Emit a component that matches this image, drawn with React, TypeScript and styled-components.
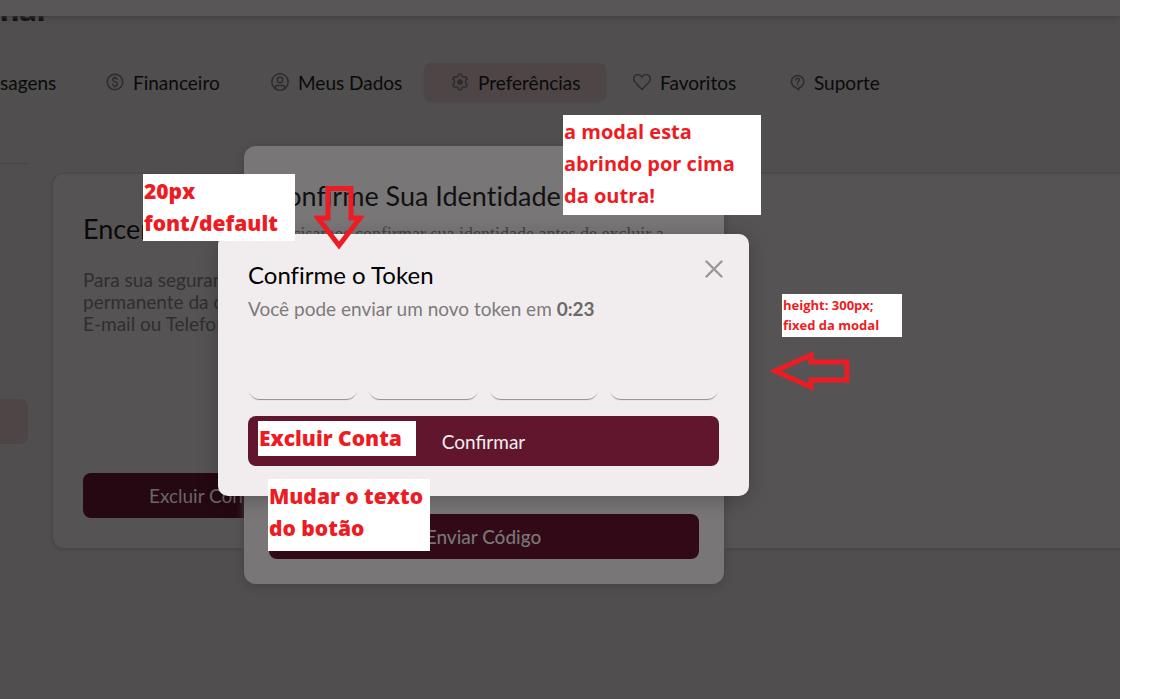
import React from "react";
import styled, { createGlobalStyle } from "styled-components";

const GlobalStyle = createGlobalStyle`
  *, *::before, *::after { box-sizing: border-box; }
  body {
    margin: 0;
    background: #fff;
    font-family: Lato, "Open Sans", sans-serif;
    font-variant-ligatures: none;
  }
  h1, h2, h3, p { margin: 0; font-weight: 400; }
  button, input { font-family: inherit; border: 0; padding: 0; }
`;

const Page = styled.div`
  min-height: 100vh;
  padding-right: 32px;
  display: flex;
`;

const Screen = styled.div`
  position: relative;
  flex: 1;
  min-width: 0;
  overflow: hidden;
  background: #504e4e;
  color: #0b0a0a;
`;

const TopBar = styled.header`
  position: relative;
  z-index: 1;
  height: 16px;
  background: #595657;
  box-shadow: 0 1px 6px #403e3e;
`;

const PageTitle = styled.h1`
  height: 63px;
  margin-top: -16px;
  font-size: 34px;
  line-height: 16px;
  font-weight: 900;
`;

const Tabs = styled.nav`
  display: flex;
  height: 38px;
`;

const Tab = styled.a<{ $width: number; $active?: boolean; $flush?: boolean }>`
  width: ${(p) => p.$width}px;
  flex: none;
  display: flex;
  align-items: center;
  gap: 9px;
  padding-left: ${(p) => (p.$flush ? 0 : 27)}px;
  border-radius: 8px;
  background: ${(p) => (p.$active ? "#4e4546" : "transparent")};
  box-shadow: ${(p) => (p.$active ? "0 1px 2px #484646" : "none")};
  color: inherit;
  text-decoration: none;
  font-size: 19px;
  white-space: nowrap;
`;

const TabIcon = styled.svg`
  flex: none;
  fill: none;
  stroke: #2d2b2b;
  stroke-linecap: round;
  stroke-linejoin: round;
`;

const Content = styled.div`
  display: flex;
  gap: 24px;
  margin-top: 62px;
`;

const SideMenu = styled.aside`
  width: 28px;
  flex: none;
`;

const SideRule = styled.div`
  height: 1px;
  background: #474545;
`;

const SideItem = styled.div`
  height: 45px;
  margin-top: 235px;
  border-radius: 0 8px 8px 0;
  background: #4e4546;
`;

const Card = styled.section`
  flex: 1;
  display: flex;
  flex-direction: column;
  align-items: flex-start;
  height: 376px;
  margin-top: 10px;
  padding: 40px 30px 30px;
  border: 1px solid #4a4848;
  border-right: 0;
  border-radius: 12px 0 0 12px;
  background: #565354;
  box-shadow: 0 1px 2px #464444;
`;

const CardTitle = styled.h2`
  font-size: 27px;
  line-height: 30px;
`;

const CardText = styled.p`
  margin-top: 25px;
  font-size: 19px;
  line-height: 22px;
  color: #302e2e;
`;

const DangerButton = styled.button`
  width: 242px;
  height: 45px;
  margin-top: auto;
  border-radius: 8px;
  background: #250811;
  color: #6a6768;
  font-size: 19px;
`;

const Overlay = styled.div`
  position: absolute;
  inset: 31px 153px 0 0;
  z-index: 2;
  display: flex;
  align-items: center;
  justify-content: center;
`;

const IdentityModal = styled.section`
  display: flex;
  flex-direction: column;
  width: 480px;
  height: 438px;
  padding: 32px 25px 25px;
  border-radius: 12px;
  background: #797677;
  box-shadow: 0 2px 8px #444242;
  color: #121111;
`;

const IdentityTitle = styled.h2`
  font-size: 27px;
  line-height: 36px;
`;

const IdentityText = styled.p`
  margin-top: 8px;
  font-family: "Liberation Serif", serif;
  font-size: 18px;
  line-height: 24px;
  color: #444243;
`;

const SendButton = styled.button`
  height: 45px;
  margin-top: auto;
  border-radius: 8px;
  background: #320a17;
  color: #797677;
  font-size: 19px;
  font-weight: 500;
`;

const TokenModal = styled.section`
  display: flex;
  flex-direction: column;
  width: 531px;
  height: 262px;
  padding: 26px 30px 30px;
  border-radius: 10px;
  background: #f1edee;
  box-shadow: 0 4px 20px rgba(0, 0, 0, 0.25);
  color: #000;
`;

const TokenHeader = styled.header`
  display: flex;
  align-items: center;
  justify-content: space-between;
  height: 30px;
`;

const TokenTitle = styled.h2`
  font-size: 24px;
  line-height: 30px;
`;

const CloseButton = styled.button`
  width: 30px;
  height: 30px;
  margin: -12px -10px 0 0;
  display: grid;
  place-items: center;
  background: none;
`;

const TokenText = styled.p`
  margin-top: 8px;
  font-size: 19px;
  line-height: 22px;
  color: #7d7a7b;

  strong { color: #6b6869; }
`;

const Digits = styled.div`
  display: grid;
  grid-template-columns: repeat(4, 1fr);
  gap: 10px;
  margin-top: auto;
  margin-bottom: 17px;
`;

const Digit = styled.input`
  width: 100%;
  height: 45px;
  border-radius: 12px;
  background: #f1edee;
  box-shadow: 0 2px 1px -1px #8e8b8c;
  text-align: center;
  font-size: 19px;
`;

const ConfirmButton = styled.button`
  height: 50px;
  flex: none;
  border-radius: 8px;
  background: #61162d;
  color: #f1edee;
  font-size: 19px;
`;

const Note = styled.p<{ $x: number; $y: number; $w: number; $h: number; $small?: boolean; $heavy?: boolean }>`
  position: absolute;
  z-index: 3;
  left: ${(p) => p.$x}px;
  top: ${(p) => p.$y}px;
  width: ${(p) => p.$w}px;
  height: ${(p) => p.$h}px;
  padding: 1px;
  background: #fff;
  color: #ed1c24;
  font-family: "Open Sans", "Noto Sans", sans-serif;
  font-size: ${(p) => (p.$small ? 13 : p.$heavy ? 21 : 20)}px;
  line-height: ${(p) => (p.$small ? 20 : 32)}px;
  font-weight: ${(p) => (p.$heavy ? 800 : 700)};
  white-space: nowrap;
`;

const Arrow = styled.svg<{ $x: number; $y: number }>`
  position: absolute;
  z-index: 3;
  left: ${(p) => p.$x}px;
  top: ${(p) => p.$y}px;
  fill: none;
  stroke: #ed1c24;
  stroke-width: 5;
`;

export default function App() {
  return (
    <Page>
      <GlobalStyle />
      <Screen>
        <TopBar />
        <PageTitle>nal</PageTitle>
        <Tabs>
          <Tab href="#mensagens" $width={79} $flush>sagens</Tab>
          <Tab href="#financeiro" $width={165}>
            <TabIcon width="18" height="18" viewBox="0 0 18 18">
              <circle cx="9" cy="9" r="7.7" strokeWidth="1.5" />
              <path d="M11.3 6.6C11 5.4 10.1 5 9 5 7.700 5 6.700 5.700 6.700 6.900 6.700 9.500 11.500 8.300 11.500 11 11.500 12.300 10.400 13 9 13 7.700 13 6.700 12.400 6.500 11.200M9 3.700V5M9 13V14.300" strokeWidth="1.4" />
            </TabIcon>
            Financeiro
          </Tab>
          <Tab href="#dados" $width={180}>
            <TabIcon width="18" height="18" viewBox="0 0 18 18">
              <circle cx="9" cy="9" r="8.200" strokeWidth="1.5" />
              <circle cx="9" cy="7" r="2.700" strokeWidth="1.5" />
              <path d="M4.300 15.400V14.500C4.300 13.300 5.200 12.500 6.300 12.500H11.700C12.800 12.500 13.700 13.300 13.700 14.500V15.400" strokeWidth="1.5" />
            </TabIcon>
            Meus Dados
          </Tab>
          <Tab href="#preferencias" $width={182} $active>
            <TabIcon width="18" height="18" viewBox="0 0 24 24">
              <path d="M9.600 4.200 10.200 1.500H13.800L14.400 4.200 17.200 5.800 19.900 5 21.700 8.100 19.700 10.100V13.900L21.700 15.900 19.900 19 17.200 18.200 14.400 19.800 13.800 22.500H10.200L9.600 19.800 6.800 18.200 4.100 19 2.300 15.900 4.300 13.900V10.100L2.300 8.100 4.100 5 6.800 5.800Z" strokeWidth="1.900" />
              <circle cx="12" cy="12" r="3" fill="#2d2b2b" strokeWidth="1.500" />
            </TabIcon>
            Preferências
          </Tab>
          <Tab href="#favoritos" $width={157}>
            <TabIcon width="18" height="18" viewBox="0 0 18 18">
              <path d="M9 16.500 2.100 9.300C-.6 6.200 1 1.600 4.900 1.600 6.800 1.600 8.200 2.500 9 4.200 9.800 2.500 11.200 1.600 13.100 1.600 17 1.600 18.600 6.200 15.900 9.300Z" strokeWidth="1.400" />
            </TabIcon>
            Favoritos
          </Tab>
          <Tab href="#suporte" $width={143}>
            <TabIcon width="15" height="17" viewBox="0 0 15 17">
              <path d="M9.200 13.700A6.200 6.200 0 1 0 6 13.700L8.500 15.800Z" strokeWidth="1.500" />
              <path d="M5.700 6.100C5.700 3.600 9.400 3.700 9.400 6 9.400 7.400 7.600 7.500 7.600 9M7.600 10.800V11" strokeWidth="1.300" />
            </TabIcon>
            Suporte
          </Tab>
        </Tabs>

        <Content>
          <SideMenu>
            <SideRule />
            <SideItem />
          </SideMenu>
          <Card>
            <CardTitle>Encerrar Conta</CardTitle>
            <CardText>
              Para sua segurança, a exclusão<br />
              permanente da conta requer seu<br />
              E-mail ou Telefone.
            </CardText>
            <DangerButton type="button">Excluir Conta</DangerButton>
          </Card>
        </Content>

        <Overlay>
          <IdentityModal>
            <IdentityTitle>Confirme Sua Identidade</IdentityTitle>
            <IdentityText>
              Precisamos confirmar sua identidade antes de excluir a<br />
              conta.
            </IdentityText>
            <SendButton type="button">Enviar Código</SendButton>
          </IdentityModal>
        </Overlay>

        <Overlay>
          <TokenModal role="dialog" aria-labelledby="token-title">
            <TokenHeader>
              <TokenTitle id="token-title">Confirme o Token</TokenTitle>
              <CloseButton type="button" aria-label="Fechar">
                <svg width="18" height="18" viewBox="0 0 18 18" fill="none" stroke="#9b9798" strokeWidth="2.400" strokeLinecap="round">
                  <path d="M1.500 1.500 16.500 16.500M16.500 1.500 1.500 16.500" />
                </svg>
              </CloseButton>
            </TokenHeader>
            <TokenText>Você pode enviar um novo token em <strong>0:23</strong></TokenText>
            <Digits>
              {[1, 2, 3, 4].map((n) => (
                <Digit key={n} maxLength={1} aria-label={`Dígito ${n}`} />
              ))}
            </Digits>
            <ConfirmButton type="button">Confirmar</ConfirmButton>
          </TokenModal>
        </Overlay>

        <Note $x={143} $y={174} $w={152} $h={67} $heavy>20px<br />font/default</Note>
        <Note $x={563} $y={115} $w={198} $h={100}>a modal esta<br />abrindo por cima<br />da outra!</Note>
        <Note $x={782} $y={294} $w={120} $h={43} $small>height: 300px;<br />fixed da modal</Note>
        <Note $x={258} $y={421} $w={158} $h={35} $heavy>Excluir Conta</Note>
        <Note $x={268} $y={479} $w={162} $h={72} $heavy>Mudar o texto<br />do botão</Note>

        <Arrow $x={314} $y={184} width="50" height="66" viewBox="0 0 50 66">
          <path d="M14 4.500H37V34H46L25 61.500 4 34H14Z" />
        </Arrow>
        <Arrow $x={770} $y={350} width="82" height="42" viewBox="0 0 82 42">
          <path d="M5 21 41 5V12H77V30H41V37Z" />
        </Arrow>
      </Screen>
    </Page>
  );
}
